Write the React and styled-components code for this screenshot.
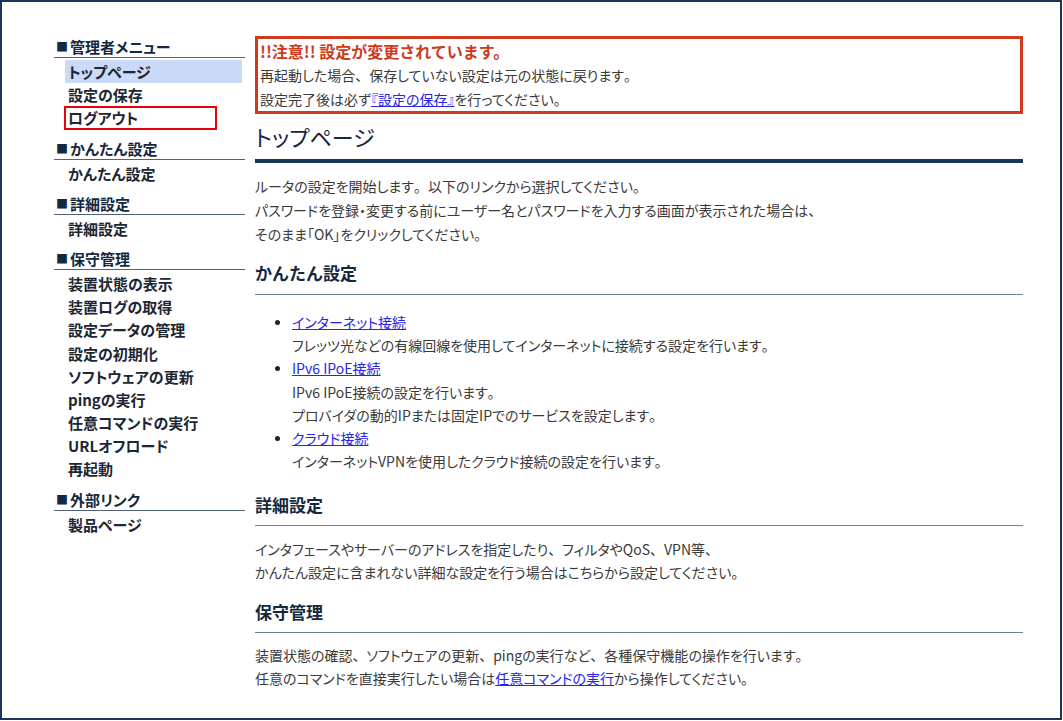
import React from 'react';
import styled, { createGlobalStyle } from 'styled-components';

const GlobalStyle = createGlobalStyle`
  html, body {
    margin: 0;
    padding: 0;
    background: #ffffff;
  }
  body {
    font-family: "Noto Sans CJK JP", "Noto Sans", sans-serif;
  }
`;

const colors = {
  frame: '#1f3558',
  navy: '#14283f',
  text: '#3a3a3a',
  rule: '#6d7f92',
  link: '#2626e6',
  warn: '#cf3a1c',
  current: '#ccdafa',
};

// Page frame
const Frame = styled.div`
  box-sizing: border-box;
  width: 1062px;
  height: 720px;
  border: 2px solid ${colors.frame};
  padding: 34px 0 0 52px;
  display: grid;
  grid-template-columns: 191px 768px;
  column-gap: 10px;
  align-items: start;
  overflow: hidden;
`;

// Sidebar
const Sidebar = styled.nav`
  display: flex;
  flex-direction: column;
  font-feature-settings: "palt";
`;

const MenuSection = styled.section`
  margin-top: ${p => (p.$first ? '0' : '8px')};
`;

const MenuHeading = styled.h3`
  margin: 0;
  height: 21px;
  padding-left: 2px;
  font-size: 15px;
  line-height: 21px;
  font-weight: 700;
  color: ${colors.navy};
  border-bottom: 1.5px solid #50637a;
  overflow: hidden;
  &::before {
    content: '■';
    display: inline-block;
    font-size: 12px;
    line-height: 1;
    margin-right: 2px;
    vertical-align: 1px;
  }
`;

const MenuList = styled.ul`
  list-style: none;
  margin: 2px 0 0;
  padding: 0;
`;

const MenuItem = styled.li`
  box-sizing: border-box;
  margin-left: ${p => (p.$marked ? '10px' : '11px')};
  width: ${p => (p.$marked ? '153px' : '177px')};
  height: 23.2px;
  padding-left: ${p => (p.$marked ? '4px' : '3px')};
  font-size: 15px;
  line-height: 23.2px;
  font-weight: 700;
  color: #1d2633;
  background: ${p => (p.$current ? colors.current : 'transparent')};
  box-shadow: ${p => (p.$marked ? 'inset 0 0 0 2px #e8000c' : 'none')};
  white-space: nowrap;
`;

// Main column
const Main = styled.main`
  display: flex;
  flex-direction: column;
  color: ${colors.text};
  font-size: 14px;
  font-feature-settings: "palt";
`;

// full-width punctuation, as in the original font
const Punct = styled.span`
  font-feature-settings: normal;
`;

const Notice = styled.div`
  border: 3px solid ${colors.warn};
  padding: 0 4px 0 2px;
  line-height: 24px;
`;

const NoticeTitle = styled.div`
  font-size: 16px;
  font-weight: 700;
  color: ${colors.warn};
  font-feature-settings: normal;
`;

const Link = styled.a`
  color: ${colors.link};
  text-decoration: underline;
  cursor: pointer;
`;

const PageTitle = styled.h1`
  margin: 7px 0 0;
  padding-bottom: 8px;
  font-size: 22px;
  line-height: 30px;
  font-weight: 400;
  color: ${colors.navy};
  border-bottom: 4px solid #173659;
`;

const Para = styled.p`
  margin: ${p => p.$mt || '13px'} 0 0;
  line-height: ${p => p.$lh || '23px'};
`;

const SectionTitle = styled.h2`
  margin: ${p => p.$mt || '15px'} 0 0;
  padding-bottom: ${p => p.$pb || '8px'};
  font-size: 17px;
  line-height: 24px;
  font-weight: 700;
  color: ${colors.navy};
  border-bottom: 1px solid ${colors.rule};
  font-feature-settings: normal;
`;

const LinkList = styled.ul`
  margin: 16px 0 0;
  padding-left: 37px;
  line-height: 23.2px;
  li::marker {
    font-size: 13px;
    color: #222;
  }
`;

const Desc = styled.div`
  color: ${colors.text};
`;

// keeps 、and 。 at full width
const T = ({ children }) =>
  String(children)
    .split(/([、。])/)
    .map((part, i) => (part === '、' || part === '。' ? <Punct key={i}>{part}</Punct> : part));

const menu = [
  {
    title: '管理者メニュー',
    items: ['トップページ', '設定の保存', 'ログアウト'],
  },
  { title: 'かんたん設定', items: ['かんたん設定'] },
  { title: '詳細設定', items: ['詳細設定'] },
  {
    title: '保守管理',
    items: [
      '装置状態の表示',
      '装置ログの取得',
      '設定データの管理',
      '設定の初期化',
      'ソフトウェアの更新',
      'pingの実行',
      '任意コマンドの実行',
      'URLオフロード',
      '再起動',
    ],
  },
  { title: '外部リンク', items: ['製品ページ'] },
];

export default function App() {
  return (
    <>
      <GlobalStyle />
      <Frame>
        <Sidebar>
          {menu.map((sec, i) => (
            <MenuSection key={sec.title} $first={i === 0}>
              <MenuHeading>{sec.title}</MenuHeading>
              <MenuList>
                {sec.items.map(item => (
                  <MenuItem
                    key={item}
                    $current={item === 'トップページ'}
                    $marked={item === 'ログアウト'}
                  >
                    {item}
                  </MenuItem>
                ))}
              </MenuList>
            </MenuSection>
          ))}
        </Sidebar>

        <Main>
          <Notice>
            <NoticeTitle>!!注意!! 設定が変更されています。</NoticeTitle>
            <div><T>再起動した場合、保存していない設定は元の状態に戻ります。</T></div>
            <div>
              設定完了後は必ず<Link>『設定の保存』</Link><T>を行ってください。</T>
            </div>
          </Notice>

          <PageTitle>トップページ</PageTitle>
          <Para $mt="11px" $lh="24px">
            <T>ルータの設定を開始します。以下のリンクから選択してください。</T>
            <br />
            <T>パスワードを登録・変更する前にユーザー名とパスワードを入力する画面が表示された場合は、</T>
            <br />
            <T>そのまま「OK」をクリックしてください。</T>
          </Para>

          <SectionTitle $pb="9px">かんたん設定</SectionTitle>
          <LinkList>
            <li>
              <Link>インターネット接続</Link>
              <Desc><T>フレッツ光などの有線回線を使用してインターネットに接続する設定を行います。</T></Desc>
            </li>
            <li>
              <Link>IPv6 IPoE接続</Link>
              <Desc><T>IPv6 IPoE接続の設定を行います。</T></Desc>
              <Desc><T>プロバイダの動的IPまたは固定IPでのサービスを設定します。</T></Desc>
            </li>
            <li>
              <Link>クラウド接続</Link>
              <Desc><T>インターネットVPNを使用したクラウド接続の設定を行います。</T></Desc>
            </li>
          </LinkList>

          <SectionTitle $mt="20px" $pb="8px">詳細設定</SectionTitle>
          <Para $mt="12px">
            <T>インタフェースやサーバーのアドレスを指定したり、フィルタやQoS、VPN等、</T>
            <br />
            <T>かんたん設定に含まれない詳細な設定を行う場合はこちらから設定してください。</T>
          </Para>

          <SectionTitle $mt="16px">保守管理</SectionTitle>
          <Para $mt="11px">
            <T>装置状態の確認、ソフトウェアの更新、pingの実行など、各種保守機能の操作を行います。</T>
            <br />
            任意のコマンドを直接実行したい場合は<Link>任意コマンドの実行</Link><T>から操作してください。</T>
          </Para>
        </Main>
      </Frame>
    </>
  );
}
